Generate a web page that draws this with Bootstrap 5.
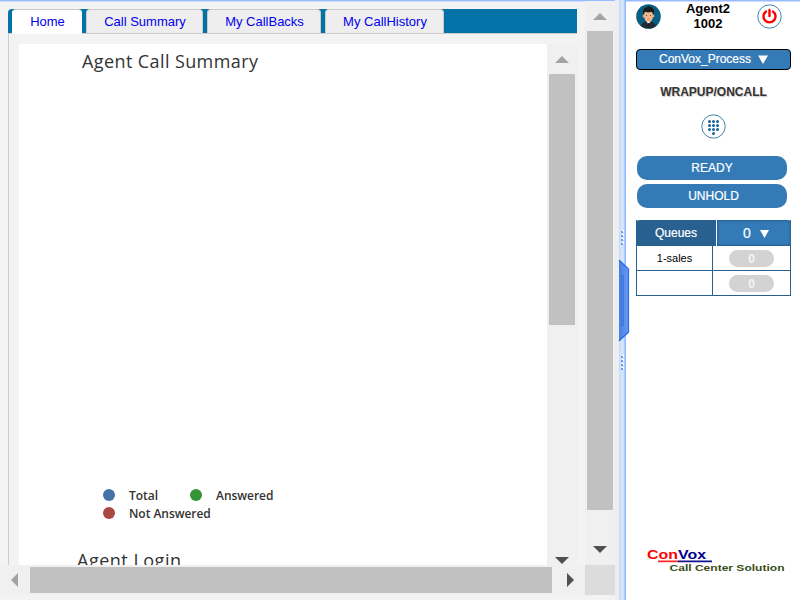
<!DOCTYPE html>
<html lang="en">
<head>
<meta charset="utf-8">
<meta name="viewport" content="width=device-width, initial-scale=1">
<title>ConVox Agent</title>
<link href="https://cdn.jsdelivr.net/npm/bootstrap@5.3.0/dist/css/bootstrap.min.css" rel="stylesheet">
<style>
body{font-family:"Liberation Sans",Arial,sans-serif;font-size:13px;line-height:15px;color:#000;width:800px;height:600px}
.top-line{height:2px;border-top:1px solid #9bf;background:#cddcf9;flex:none;margin-bottom:-1px}
.main-pane{width:615px;height:600px;background:#f3f3f3}
.work{width:585px;height:564px;padding:8px 8px 0}
.tab-strip{height:25px;background:#0272a7;border-bottom:1px solid #ccc;gap:4px;padding-left:4px;border-radius:4px 0 0 0}
.tab-strip .nav-link{padding:0 0 0 1px;height:24px;line-height:24px;text-align:center;color:#00e;background:#eee;border:1px solid #ccc;border-bottom:0;border-radius:4px 4px 0 0}
.tab-strip .nav-link.active{background:#fff;height:25px;color:#00e;border-color:#ccc #fff}
.tab-a{width:70px}.tab-b{width:117px}.tab-c{width:114px}.tab-d{width:119px}
.tab-body{border-left:1px solid #ccc;height:531px;padding:10px 0 0 10px}
.report{width:528px;height:521px;background:#fff;font-family:"Open Sans",sans-serif;color:#333}
.report h1,.report h2{font-size:18px;font-weight:400;line-height:24px;margin:0}
.report h1{padding:5px 0 0 63px;letter-spacing:.4px}
.report h2{padding:25px 0 0 58px;letter-spacing:.5px}
.legend-box{margin:414px 0 0 84px;font-size:12px;font-weight:600;line-height:18px;letter-spacing:-.04px}
.dot{width:12px;height:12px;border-radius:50%;margin:-2px 14px 0 0}
.sb{background:#f0f0f0;width:30px}
.sb svg{display:block;flex:none}
.thumb{background:#c1c1c1;flex:none}
.sb-inner{height:521px;padding-left:2px;width:30px}
.splitter{width:11px;height:600px;background:linear-gradient(90deg,#eee 4px,#c2dcfb 4px,#dceafd 8px,#c2d9fb 9px,#9bf 10px)}
.side{width:174px;height:600px;background:#fff}
.side-body{width:155px;margin-left:10px}
.process{height:21px;background:#337ab7;color:#fff;border:1px solid #000;border-radius:4px;font-size:12px;line-height:19px;padding:0;gap:7px}
.process,.act,.q-head{-webkit-text-stroke:.2px #fff}
.status{font-size:12px;font-weight:700;color:#333;text-shadow:1px 1px 1px #ccc}
.act{width:150px;height:24px;background:#337ab7;color:#fff;border:0;border-radius:10px;font-size:12px;line-height:24px;padding:0;margin-left:1px}
.queue{width:155px;font-size:11px;border:1px solid #286090;border-top:0}
.q-head{height:26px;color:#fff;font-size:12px}
.q-name{width:81px;background:#286090;border-right:1px solid #fff;border-radius:4px 0 0 0;line-height:26px}
.q-total{width:74px;background:#337ab7;border-radius:0 4px 0 0;font-size:14px;box-shadow:inset 0 0 2px 1px #286090;padding-left:4px}
.q-row{height:25px;border-top:1px solid #286090;line-height:24px}
.q-row>div:first-child{width:76px;border-right:1px solid #286090}
.count{width:45px;height:17px;border-radius:9px;background:#d3d3d3;color:#f4f4f4;font-weight:700;font-size:12px;line-height:19px;margin:4px 0 0 16px}
</style>
<script src="https://cdn.jsdelivr.net/npm/bootstrap@5.3.0/dist/js/bootstrap.bundle.min.js"></script>
</head>
<body class="d-flex overflow-hidden">
<main class="main-pane d-flex flex-column flex-shrink-0">
  <div class="top-line"></div>
  <div class="d-flex">
    <section class="work overflow-hidden">
      <nav class="tab-strip nav flex-nowrap">
        <a class="nav-link active tab-a" href="#">Home</a>
        <a class="nav-link tab-b" href="#">Call Summary</a>
        <a class="nav-link tab-c" href="#">My CallBacks</a>
        <a class="nav-link tab-d" href="#">My CallHistory</a>
      </nav>
      <div class="tab-body d-flex">
        <div class="report overflow-hidden flex-shrink-0">
          <h1>Agent Call Summary</h1>
          <div class="legend-box">
            <div class="d-flex align-items-center"><span class="dot" style="background:#4572a7"></span><span style="width:61px">Total</span><span class="dot" style="background:#359438"></span>Answered</div>
            <div class="d-flex align-items-center"><span class="dot" style="background:#aa4643"></span>Not Answered</div>
          </div>
          <h2>Agent Login</h2>
        </div>
        <div class="sb sb-inner flex-shrink-0">
          <svg width="26" height="30"><path d="M6 19 13 12 20 19Z" fill="#a3a3a3"/></svg>
          <div class="thumb" style="width:26px;height:251px"></div>
          <svg width="26" height="240"><path d="M6 232H20L13 239Z" fill="#505050"/></svg>
        </div>
      </div>
    </section>
    <div class="sb ps-0">
      <svg width="30" height="30"><path d="M8 19 15 12 22 19Z" fill="#a3a3a3"/></svg>
      <div class="thumb" style="width:26px;height:479px;margin-left:2px"></div>
      <svg width="30" height="54"><path d="M8 36H22L15 43Z" fill="#505050"/></svg>
    </div>
  </div>
  <div class="d-flex" style="height:30px;background:#f0f0f0">
    <svg width="30" height="30"><path d="M18 8V22L11 15Z" fill="#a3a3a3"/></svg>
    <div class="thumb" style="width:522px;height:26px;margin-top:2px"></div>
    <svg width="33" height="30"><path d="M15 8V22L22 15Z" fill="#505050"/></svg>
    <div style="width:30px;background:#dcdcdc"></div>
  </div>
</main>
<div class="splitter flex-shrink-0 position-relative">
  <svg class="position-absolute top-0 start-0" width="15" height="600" style="z-index:2">
    <defs><linearGradient id="g"><stop offset="0" stop-color="#477fe2"/><stop offset="1" stop-color="#6a9af0"/></linearGradient></defs>
    <path d="M4 260 13.5 269V333L4 341Z" fill="url(#g)"/>
    <path d="M4 260 13.5 269V332L4 341" fill="none" stroke="#2a6bea" stroke-width="1.2"/>
    <path d="M6.500 275.500H8.500V325.500H6.500Z" fill="none" stroke="#326edb" stroke-width=".8"/>
    <g fill="#fff"><path d="M7 230h2v2H7zm0 4h2v2H7zm0 4h2v2H7zm0 4h2v2H7zM7 355h2v2H7zm0 4h2v2H7zm0 4h2v2H7zm0 4h2v2H7z"/></g>
    <g fill="#6b9df5"><path d="M6 231h2v2H6zm0 4h2v2H6zm0 4h2v2H6zm0 4h2v2H6zM6 356h2v2H6zm0 4h2v2H6zm0 4h2v2H6zm0 4h2v2H6z"/></g>
  </svg>
</div>
<aside class="side d-flex flex-column flex-shrink-0">
  <div class="top-line"></div>
  <div class="side-body">
    <header class="d-flex" style="height:48px">
      <svg width="26" height="30" viewBox="0 0 26 30"><circle cx="12.500" cy="15.500" r="12.300" fill="#075e80"/><path d="M5 25.200Q6 20.500 12.500 20.300 19 20.500 20 25.200 13 30 5 25.200Z" fill="#252b36"/><path d="M10 19.500h5l-2.500 4z" fill="#fff"/><path d="M12 22h1.200l.6 4h-2.400z" fill="#222"/><circle cx="8" cy="15" r="1.500" fill="#e8a77c"/><circle cx="17" cy="15" r="1.500" fill="#e8a77c"/><path d="M8.300 10H16.800V16Q16.500 20.500 12.500 21 8.500 20.500 8.300 16Z" fill="#f2b58c"/><path d="M7.500 13.500Q6 7 10 6.500 13 4 16.500 7 19 8.500 17.300 13.500 16.500 11 15 10.700 12 12 10 10.800 8.300 11 7.500 13.500Z" fill="#1b1b1b"/><path d="M10 14.500h1m3 0h1" stroke="#333" stroke-width=".8"/><path d="M11.300 18.200h2.400" stroke="#b56a50" stroke-width=".7"/></svg>
      <div class="text-center fw-bold" style="width:92px">Agent2<br>1002</div>
      <svg width="30" height="30" viewBox="0 0 30 30"><circle cx="15.500" cy="15.500" r="11.700" fill="#fff" stroke="#4682a9"/><path d="M12 10.500A6 6 0 1 0 19 10.500" fill="none" stroke="#f00" stroke-width="2.400" stroke-linecap="round"/><path d="M15.500 9v6" stroke="#f00" stroke-width="2.400" stroke-linecap="round"/></svg>
    </header>
    <button class="process btn w-100 d-flex justify-content-center align-items-center">ConVox_Process <svg width="10" height="9"><path d="M0 .5H10L5 9Z" fill="#fff"/></svg></button>
    <div class="status text-center" style="margin-top:15px">WRAPUP/ONCALL</div>
    <svg class="d-block mx-auto" width="25" height="26" viewBox="0 0 25 26" style="margin-top:13px"><circle cx="12.500" cy="13.500" r="11.700" fill="#fff" stroke="#4682a9"/><g fill="none" stroke="#17649b" stroke-width="3" stroke-linecap="round"><path d="M8.500 8.500h0m4 0h0m4 0h0M8.500 12.500h0m4 0h0m4 0h0M8.500 16.500h0m4 0h0m4 0h0M12.500 20.500h0"/></g></svg>
    <button class="act btn d-block" style="margin-top:17px">READY</button>
    <button class="act btn d-block" style="margin-top:4px;padding-left:3px">UNHOLD</button>
    <div class="queue text-center" style="margin-top:12px">
      <div class="q-head d-flex" style="margin:0 -1px -1px"><div class="q-name">Queues</div><div class="q-total d-flex justify-content-center align-items-center">0<svg class="ms-2" width="10" height="9"><path d="M1 1H10L5.500 9Z" fill="#fff"/></svg></div></div>
      <div class="q-row d-flex"><div>1-sales</div><div class="count">0</div></div>
      <div class="q-row d-flex"><div></div><div class="count">0</div></div>
    </div>
  </div>
  <svg width="174" height="40" style="margin:auto 0 15px" viewBox="0 0 174 40" font-family="Liberation Sans" font-weight="700">
    <text x="21" y="13.500" font-size="13" fill="#f00" textLength="31" lengthAdjust="spacingAndGlyphs">Con</text>
    <text x="52" y="13.500" font-size="13" fill="#00008b" textLength="28" lengthAdjust="spacingAndGlyphs">Vox</text>
    <path d="M32 15.500h20v1.700H32z" fill="#f22"/><path d="M52 15.500h34v1.700H52z" fill="#11118b"/>
    <text x="43.500" y="25.800" font-size="9.300" fill="#354c16" textLength="115" lengthAdjust="spacingAndGlyphs">Call Center Solution</text>
  </svg>
</aside>
</body>
</html>
